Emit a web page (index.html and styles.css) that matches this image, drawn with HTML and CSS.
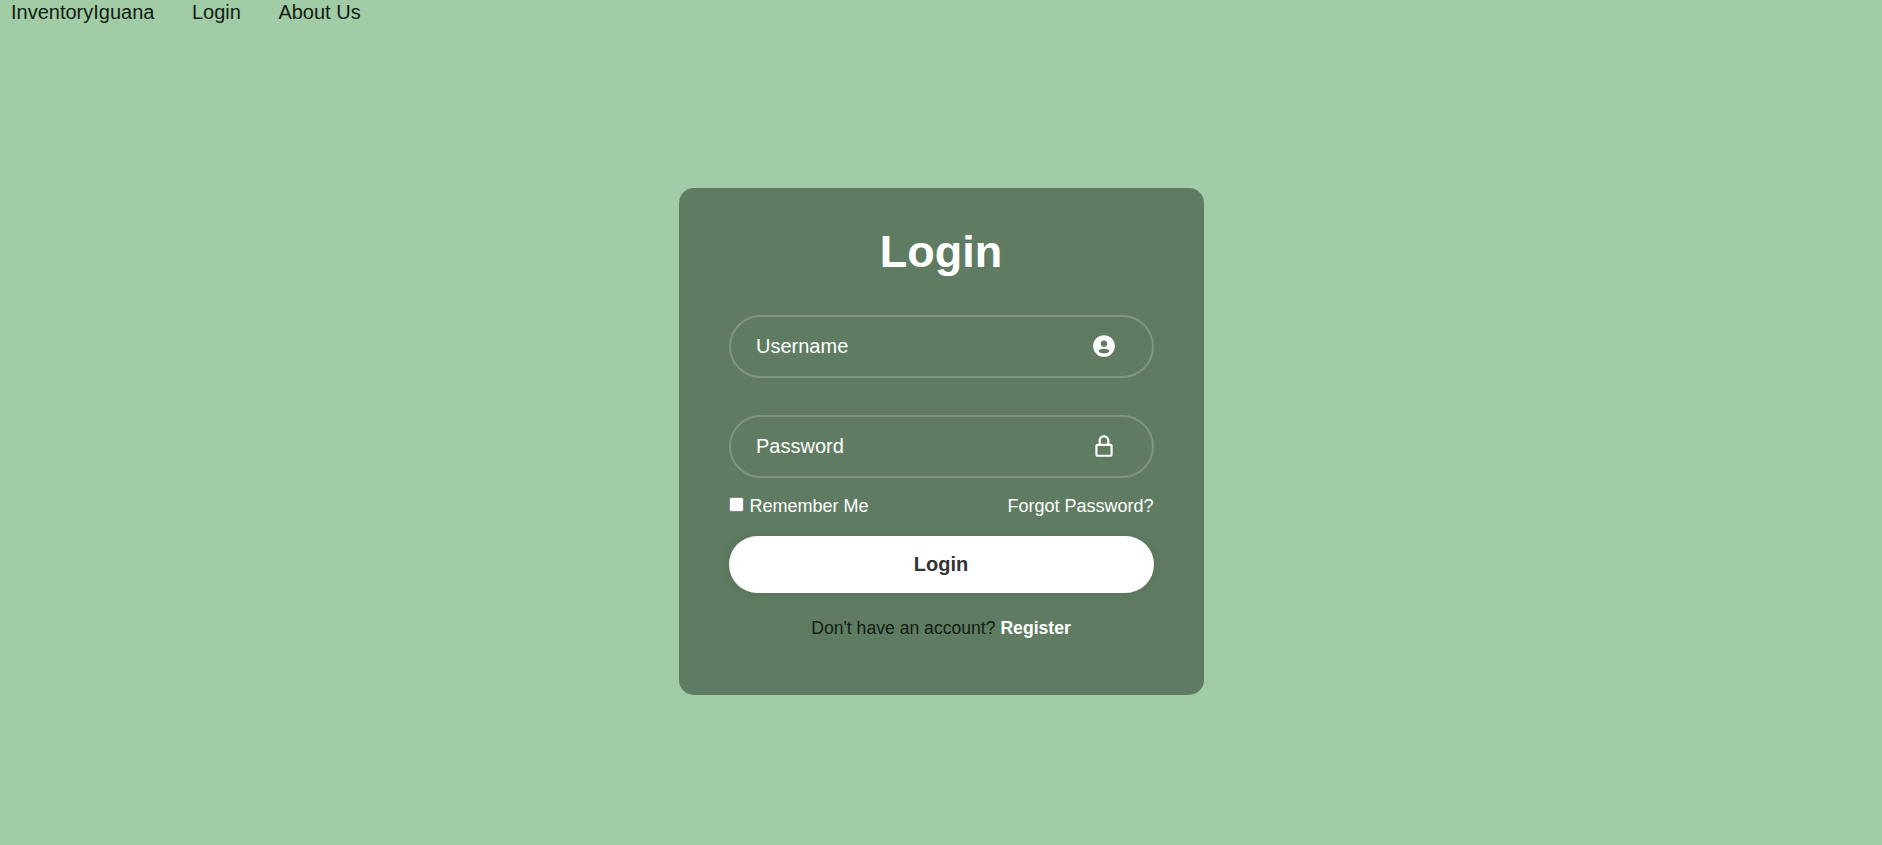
FILE: index.html
```html
<!DOCTYPE html>
<html lang="en">
<head>
    <meta charset="UTF-8">
    <meta name="viewport" content="width=device-width, initial-scale=1.0">
    <title>InventoryIguana</title>
    <link rel="stylesheet" href="styles.css">
</head>
<body>
    <nav class="navbar">
        <a href="#">InventoryIguana</a>
        <a href="#">Login</a>
        <a href="#">About Us</a>
    </nav>

    <main class="page">
        <div class="wrapper">
            <form action="">
                <h1>Login</h1>
                <div class="input-box">
                    <input type="text" placeholder="Username" required>
                    <svg class="icon" viewBox="0 0 24 24" fill="currentColor">
                        <path fill-rule="evenodd" d="M12 2a10 10 0 1 0 0 20 10 10 0 0 0 0-20zM12 7a2.900 2.900 0 1 1 0 5.800 2.900 2.900 0 0 1 0-5.800zM12 14.500c2.900 0 4.900.800 4.900 2 0 1.300-2.300 2.200-4.900 2.200s-4.900-.900-4.900-2.200c0-1.200 2-2 4.900-2z"/>
                    </svg>
                </div>
                <div class="input-box">
                    <input type="password" placeholder="Password" required>
                    <svg class="icon" viewBox="0 0 24 24" fill="currentColor">
                        <path d="M12 2C9.243 2 7 4.243 7 7v3H6c-1.103 0-2 .897-2 2v8c0 1.103.897 2 2 2h12c1.103 0 2-.897 2-2v-8c0-1.103-.897-2-2-2h-1V7c0-2.757-2.243-5-5-5zm6 10 .002 8H6v-8h12zm-9-2V7c0-1.654 1.346-3 3-3s3 1.346 3 3v3H9z"/>
                    </svg>
                </div>
                <div class="remember-forgot">
                    <label><input type="checkbox"> Remember Me</label>
                    <a href="#">Forgot Password?</a>
                </div>
                <button type="submit" class="btn">Login</button>
                <div class="register-link">
                    <p>Don't have an account? <a href="#">Register</a></p>
                </div>
            </form>
        </div>
    </main>
</body>
</html>
```
FILE: styles.css
```css
*{
    margin: 0;
    padding: 0;
    box-sizing: border-box;
    font-family: "Liberation Sans", Arial, sans-serif;
}

body{
    height: 100vh;
    display: flex;
    flex-direction: column;
    background: #a1cca5;
    color: #111d13;
    overflow: hidden;
}

a{
    color: inherit;
    text-decoration: none;
}

.navbar{
    display: flex;
    gap: 37.5px;
    height: 38px;
    padding-left: 11px;
    font-size: 20px;
    line-height: 25px;
}

.page{
    flex: 1;
    display: flex;
    justify-content: center;
    align-items: flex-start;
    padding-top: 150px;
}

.wrapper{
    width: 525px;
    height: 507px;
    padding: 38px 50px;
    border-radius: 15px;
    background: #5f7c62;
    color: #fff;
}

.wrapper h1{
    font-size: 45px;
    line-height: 52px;
    text-align: center;
}

.input-box{
    position: relative;
    width: 100%;
    height: 63px;
    margin: 37px 0;
}

.input-box + .input-box{
    margin-bottom: 18px;
}

.input-box input{
    width: 100%;
    height: 100%;
    padding: 0 56px 0 25.5px;
    border: 2px solid rgba(255, 255, 255, .2);
    border-radius: 50px;
    outline: none;
    background: transparent;
    color: #fff;
    font-size: 20px;
}

.input-box input::placeholder{
    color: #fff;
}

.input-box .icon{
    position: absolute;
    right: 37px;
    top: 18px;
    width: 26px;
    height: 26px;
}

.remember-forgot{
    display: flex;
    justify-content: space-between;
    font-size: 18px;
    line-height: 20px;
}

.remember-forgot input{
    appearance: none;
    width: 15px;
    height: 15px;
    margin-right: 1px;
    border: 1px solid #858585;
    border-radius: 2.5px;
    background: #fff;
    vertical-align: 0;
}

.btn{
    display: block;
    width: 100%;
    height: 57px;
    margin-top: 20px;
    border: none;
    border-radius: 50px;
    background: #fff;
    box-shadow: 0 0 10px rgba(0, 0, 0, .1);
    color: #333;
    font-size: 20px;
    font-weight: 600;
    cursor: pointer;
}

.register-link{
    margin-top: 25px;
    color: #111d13;
    font-size: 17.6px;
    line-height: 20px;
    text-align: center;
}

.register-link a{
    color: #fff;
    font-weight: 600;
}
```
